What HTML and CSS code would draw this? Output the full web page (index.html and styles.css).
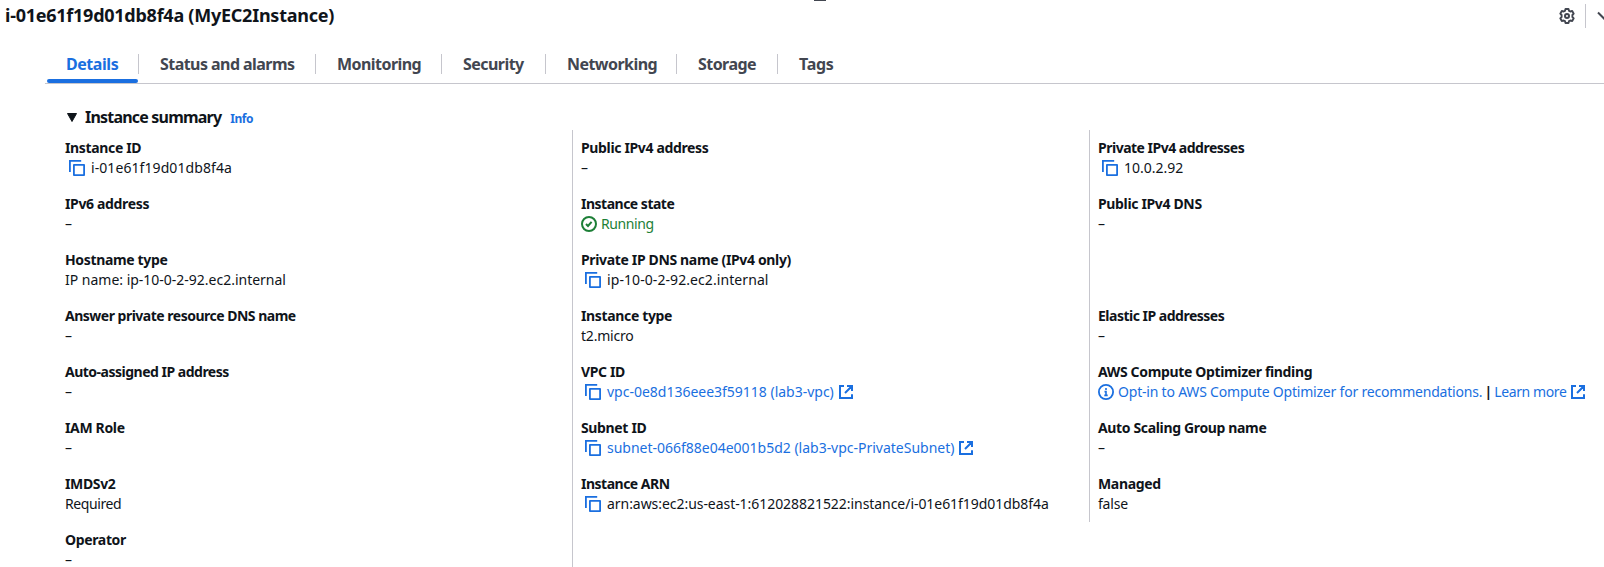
FILE: index.html
```html
<!DOCTYPE html>
<html lang="en">
<head>
<meta charset="utf-8">
<title>EC2 instance details</title>
<link rel="stylesheet" href="styles.css">
</head>
<body>
<svg class="sprite" width="0" height="0" aria-hidden="true">
  <symbol id="copy" viewBox="0 0 16 16"><path d="M.9 12V.9H12.2" fill="none" stroke="currentColor" stroke-width="1.8"/><rect x="4.9" y="4.9" width="10.2" height="10.2" fill="none" stroke="currentColor" stroke-width="1.8" stroke-linejoin="round"/></symbol>
  <symbol id="external" viewBox="0 0 16 16"><path d="M6 2H2v12h12v-3.700M9 2h5v5M14 2 7 9" fill="none" stroke="currentColor" stroke-width="2"/></symbol>
  <symbol id="check" viewBox="0 0 16 16"><circle cx="8" cy="8" r="7" fill="none" stroke="currentColor" stroke-width="2"/><path d="m5 8 2 2 3.600-4.200" fill="none" stroke="currentColor" stroke-width="2"/></symbol>
  <symbol id="info" viewBox="0 0 16 16"><circle cx="8" cy="8" r="7.100" fill="none" stroke="currentColor" stroke-width="1.800"/><path d="M8 4v2M6.500 7.600H8V11M6.300 11.400h3.400" fill="none" stroke="currentColor" stroke-width="1.600"/></symbol>
  <symbol id="gear" viewBox="0 0 16 16"><path d="M6.500 1h3l.5 1.800 1.300.7 1.900-.5 1.500 2.600L13.400 7v2l1.300 1.400-1.500 2.600-1.900-.5-1.300.7L9.500 15h-3L6 13.200l-1.300-.7-1.900.5-1.500-2.600L2.600 9V7L1.300 5.600 2.800 3l1.900.5L6 2.800z" fill="none" stroke="currentColor" stroke-width="1.900" stroke-linejoin="round"/><circle cx="8" cy="8" r="2" fill="none" stroke="currentColor" stroke-width="2"/></symbol>
</svg>
<div class="panel">
  <div class="handle"></div>
  <header class="header">
    <h1 class="title">i-01e61f19d01db8f4a (MyEC2Instance)</h1>
    <div class="actions">
      <svg class="icon gear"><use href="#gear"/></svg>
      <span class="rule"></span>
      <svg class="icon chevron" viewBox="0 0 16 16"><path d="m1 4.500 7 7 7-7" fill="none" stroke="currentColor" stroke-width="2"/></svg>
    </div>
  </header>
  <nav class="tabs">
    <a class="tab tab-details active"><span>Details</span></a>
    <a class="tab tab-status"><span>Status and alarms</span></a>
    <a class="tab tab-monitoring"><span>Monitoring</span></a>
    <a class="tab tab-security"><span>Security</span></a>
    <a class="tab tab-networking"><span>Networking</span></a>
    <a class="tab tab-storage"><span>Storage</span></a>
    <a class="tab tab-tags"><span>Tags</span></a>
  </nav>
  <section class="summary">
    <div class="summary-head"><svg class="caret" viewBox="0 0 10 9"><path d="M.5.500h9L5 8.500z" fill="currentColor" stroke="currentColor" stroke-linejoin="round"/></svg><h2>Instance summary</h2><a class="info-link">Info</a></div>
    <div class="columns">
      <dl class="column">
        <div class="field"><dt>Instance ID</dt><dd><svg class="icon copy"><use href="#copy"/></svg><span class="id">i-01e61f19d01db8f4a</span></dd></div>
        <div class="field"><dt>IPv6 address</dt><dd>–</dd></div>
        <div class="field"><dt>Hostname type</dt><dd class="wide">IP name: ip-10-0-2-92.ec2.internal</dd></div>
        <div class="field"><dt class="tight">Answer private resource DNS name</dt><dd>–</dd></div>
        <div class="field"><dt class="tight">Auto-assigned IP address</dt><dd>–</dd></div>
        <div class="field"><dt>IAM Role</dt><dd>–</dd></div>
        <div class="field"><dt>IMDSv2</dt><dd class="snug">Required</dd></div>
        <div class="field last"><dt>Operator</dt><dd>–</dd></div>
      </dl>
      <dl class="column divided">
        <div class="field"><dt>Public IPv4 address</dt><dd>–</dd></div>
        <div class="field"><dt class="tight">Instance state</dt><dd class="running snug"><svg class="icon"><use href="#check"/></svg><span>Running</span></dd></div>
        <div class="field"><dt>Private IP DNS name (IPv4 only)</dt><dd><svg class="icon copy"><use href="#copy"/></svg><span class="id">ip-10-0-2-92.ec2.internal</span></dd></div>
        <div class="field"><dt>Instance type</dt><dd>t2.micro</dd></div>
        <div class="field"><dt>VPC ID</dt><dd class="wide"><svg class="icon copy"><use href="#copy"/></svg><a>vpc-0e8d136eee3f59118 (lab3-vpc)</a><svg class="icon external"><use href="#external"/></svg></dd></div>
        <div class="field"><dt>Subnet ID</dt><dd class="wide"><svg class="icon copy"><use href="#copy"/></svg><a>subnet-066f88e04e001b5d2 (lab3-vpc-PrivateSubnet)</a><svg class="icon external"><use href="#external"/></svg></dd></div>
        <div class="field"><dt class="tight">Instance ARN</dt><dd class="arn"><svg class="icon copy"><use href="#copy"/></svg><span>arn:aws:ec2:us-east-1:612028821522:instance/i-01e61f19d01db8f4a</span></dd></div>
      </dl>
      <dl class="column divided short">
        <div class="field"><dt class="tight">Private IPv4 addresses</dt><dd class="wide"><svg class="icon copy"><use href="#copy"/></svg><span>10.0.2.92</span></dd></div>
        <div class="field"><dt>Public IPv4 DNS</dt><dd>–</dd></div>
        <div class="field"></div>
        <div class="field"><dt class="tight">Elastic IP addresses</dt><dd>–</dd></div>
        <div class="field"><dt>AWS Compute Optimizer finding</dt><dd class="finding"><svg class="icon"><use href="#info"/></svg><a>Opt-in to AWS Compute Optimizer for recommendations.</a><span class="bar">|</span><a class="snug">Learn more</a><svg class="icon external"><use href="#external"/></svg></dd></div>
        <div class="field"><dt>Auto Scaling Group name</dt><dd>–</dd></div>
        <div class="field"><dt>Managed</dt><dd>false</dd></div>
      </dl>
    </div>
  </section>
</div>
</body>
</html>
```
FILE: styles.css
```css
* { box-sizing: border-box; }
body { margin: 0; background: #fff; color: #0f141a; font: 14px/20px "Noto Sans", "Open Sans", sans-serif; }
h1, h2, dl, dd { margin: 0; }
a { color: #1a6fe0; }
.sprite { position: absolute; }
.panel { height: 567px; overflow: hidden; display: flex; flex-direction: column; }
.handle { width: 12px; height: 1px; flex: none; margin-left: 814px; background: #424650; }
.header { height: 43px; flex: none; display: flex; justify-content: space-between; align-items: flex-start; padding-left: 5px; }
.title { font-size: 18px; line-height: 22px; font-weight: 700; letter-spacing: -.25px; padding-top: 3px; white-space: nowrap; }
.actions { display: flex; align-items: center; width: 45px; flex: none; height: 24px; margin-top: 3px; color: #424650; }
.rule { width: 1px; height: 24px; flex: none; margin: 0 11px 0 10px; background: #c6c6cd; }
.icon { width: 16px; height: 16px; flex: none; overflow: visible; }
.tabs { height: 40px; flex: none; margin-left: 45px; padding-left: 2px; border-bottom: 1px solid #c6c6cd; display: flex; }
.tab { height: 39px; flex: none; color: #424650; font-size: 16px; font-weight: 700; line-height: 20px; letter-spacing: -.55px; white-space: nowrap; padding: 10px 0 0; }
.tab span { display: block; height: 20px; padding-left: 21px; border-right: 1px solid #c6c6cd; }
.tab.active { color: #1a6fe0; letter-spacing: -.45px; }
.tab.active span { padding-left: 19px; }
.tab.active::after { content: ""; display: block; width: 91px; height: 4px; margin-top: 5px; border-radius: 2px; background: #1a6fe0; }
.tab-details { width: 92px; }
.tab-status { width: 177px; }
.tab-monitoring { width: 126px; }
.tab-security { width: 104px; }
.tab-networking { width: 131px; }
.tab-storage { width: 101px; }
.tab-tags { letter-spacing: -.3px; }
.tab-tags span { border: 0; }
.summary { padding: 22px 0 0 65px; }
.summary-head { display: flex; align-items: center; height: 22px; color: #0f141a; }
.caret { width: 10px; height: 9px; margin: 0 8px 0 2px; }
.summary-head h2 { font-size: 16px; line-height: 22px; letter-spacing: -.8px; }
.info-link { font-size: 12px; font-weight: 700; letter-spacing: -.5px; margin: 3px 0 0 9px; }
.columns { display: flex; align-items: flex-start; margin-top: 2px; }
.column { width: 507px; height: 445px; flex: none; padding-top: 8px; white-space: nowrap; }
.divided { width: 517px; border-left: 1px solid #c6c6cd; padding-left: 8px; }
.short { height: 392px; }
.field { height: 56px; }
.last { height: 37px; }
.last dd { height: 20px; line-height: 14px; }
dt { font-weight: 700; letter-spacing: -.35px; }
dt.tight { letter-spacing: -.5px; }
dd { display: flex; align-items: center; height: 20px; letter-spacing: -.2px; }
.id { letter-spacing: .08px; }
.wide { letter-spacing: -.01px; }
.arn { letter-spacing: -.05px; }
.snug { letter-spacing: -.4px; }
.copy { color: #1a6fe0; margin: 0 6px 0 4px; }
.external { color: #1a6fe0; margin-left: 4px; }
.running { color: #1d7f37; gap: 4px; }
.finding .icon:first-child { color: #1a6fe0; margin-right: 4px; }
.bar { width: 12px; text-align: center; font-weight: 700; }
```
